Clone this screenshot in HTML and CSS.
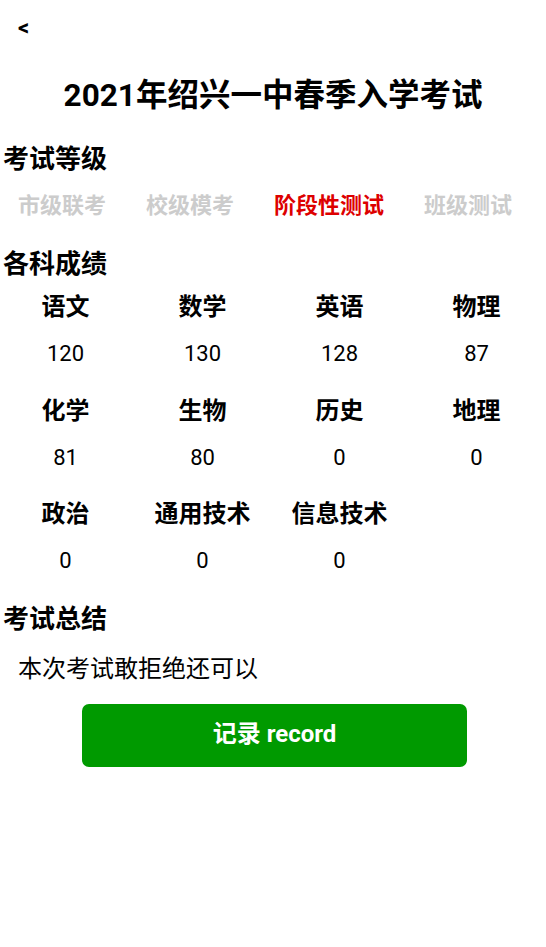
FILE: index.html
```html
<!DOCTYPE html>
<html lang="zh-CN">
<head>
<meta charset="utf-8">
<title>考试记录</title>
<link rel="stylesheet" href="styles.css">
</head>
<body>
<div class="page">
  <div class="back">&lt;</div>
  <h1 class="title">2021年绍兴一中春季入学考试</h1>

  <h2 class="section">考试等级</h2>
  <div class="tabs">
    <span class="tab">市级联考</span>
    <span class="tab">校级模考</span>
    <span class="tab active">阶段性测试</span>
    <span class="tab">班级测试</span>
  </div>

  <h2 class="section">各科成绩</h2>
  <div class="grid">
    <div class="cell"><div class="label">语文</div><div class="score">120</div></div>
    <div class="cell"><div class="label">数学</div><div class="score">130</div></div>
    <div class="cell"><div class="label">英语</div><div class="score">128</div></div>
    <div class="cell"><div class="label">物理</div><div class="score">87</div></div>
    <div class="cell"><div class="label">化学</div><div class="score">81</div></div>
    <div class="cell"><div class="label">生物</div><div class="score">80</div></div>
    <div class="cell"><div class="label">历史</div><div class="score">0</div></div>
    <div class="cell"><div class="label">地理</div><div class="score">0</div></div>
    <div class="cell"><div class="label">政治</div><div class="score">0</div></div>
    <div class="cell"><div class="label">通用技术</div><div class="score">0</div></div>
    <div class="cell"><div class="label">信息技术</div><div class="score">0</div></div>
  </div>

  <h2 class="section summary-title">考试总结</h2>
  <p class="summary">本次考试敢拒绝还可以</p>

  <button class="record">记录 record</button>
</div>
</body>
</html>
```

FILE: styles.css
```css
html, body {
  margin: 0;
  padding: 0;
  background: #ffffff;
}

body {
  font-family: "Roboto", "Noto Sans CJK SC", sans-serif;
  color: #000000;
}

.page {
  padding-top: 18px;
  display: flex;
  flex-direction: column;
}

.back {
  padding-left: 18px;
  font-size: 22px;
  font-weight: 700;
  line-height: 20px;
}

.title {
  margin: 38px 0 0 0;
  text-align: center;
  font-size: 31.5px;
  font-weight: 700;
  line-height: 40px;
}

.section {
  margin: 25px 0 0 0;
  padding-left: 3px;
  font-size: 26px;
  font-weight: 700;
  line-height: 36px;
}

.tabs {
  margin-top: 14px;
  padding-left: 18px;
  display: flex;
  gap: 40px;
}

.tab {
  font-size: 22px;
  font-weight: 700;
  line-height: 30px;
  color: #cccccc;
}

.tab.active {
  color: #dd0000;
}

.grid {
  margin-top: 10px;
  display: grid;
  grid-template-columns: repeat(4, 131px);
  column-gap: 6px;
  row-gap: 26.5px;
}

.cell {
  display: flex;
  flex-direction: column;
  align-items: center;
  gap: 17px;
}

.label {
  font-size: 24px;
  font-weight: 700;
  line-height: 30px;
}

.score {
  font-size: 22px;
  line-height: 30px;
}

.summary {
  margin: 17px 0 0 0;
  padding-left: 18px;
  font-size: 24px;
  line-height: 30px;
}

.record {
  margin: 20px 0 0 82px;
  width: 385px;
  height: 63px;
  border: none;
  border-radius: 7px;
  background: #009a00;
  color: #ffffff;
  font-family: "Roboto", "Noto Sans CJK SC", sans-serif;
  font-size: 24px;
  font-weight: 700;
  padding: 0 0 8px 0;
}
```
